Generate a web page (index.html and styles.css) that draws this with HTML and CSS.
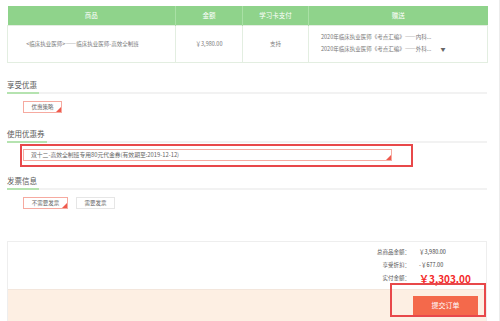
FILE: index.html
```html
<!DOCTYPE html>
<html lang="zh-CN">

<head>
    <meta charset="UTF-8">
    <meta name="viewport" content="width=device-width, initial-scale=1.0">
    <title>确认订单</title>
    <link rel="stylesheet" href="styles.css">
</head>

<body>
    <div id="page">
        <table class="goods">
            <thead>
                <tr>
                    <th class="c1">商品</th>
                    <th class="c2">金额</th>
                    <th class="c3">学习卡支付</th>
                    <th class="c4">赠送</th>
                </tr>
            </thead>
            <tbody>
                <tr>
                    <td class="name">&lt;临床执业医师&gt;——临床执业医师-高效全制班</td>
                    <td>￥3,980.00</td>
                    <td>支持</td>
                    <td class="gift">
                        <p>2020年临床执业医师《考点汇编》——内科...</p>
                        <p>2020年临床执业医师《考点汇编》——外科... <span class="arrow">▼</span></p>
                    </td>
                </tr>
            </tbody>
        </table>

        <div class="sec-title first"><span>享受优惠</span></div>
        <div class="opts">
            <span class="opt on">优惠策略</span>
        </div>

        <div class="sec-title"><span>使用优惠券</span></div>
        <div class="coupon-box">
            <div class="coupon on">双十二-高效全制班专用80元代金券(有效期至:2019-12-12)</div>
        </div>

        <div class="sec-title third"><span>发票信息</span></div>
        <div class="opts">
            <span class="opt on wide">不需要发票</span>
            <span class="opt">需要发票</span>
        </div>

        <div class="total">
            <div class="prices">
                <span class="lbl">总商品金额：</span><span class="val">￥3,980.00</span>
                <span class="lbl">享受折扣：</span><span class="val">-￥677.00</span>
                <span class="lbl">实付金额：</span><span class="val big">￥3,303.00</span>
            </div>
            <div class="submit-bar">
                <span class="submit">提交订单</span>
            </div>
            <div class="mark"></div>
        </div>
    </div>
</body>

</html>
```

FILE: styles.css
```css
* {
    margin: 0;
    padding: 0;
    box-sizing: border-box;
}

body {
    font-family: "Noto Sans CJK SC", "Noto Sans", sans-serif;
    color: #666;
    background: #fff;
}

#page {
    width: 500px;
    height: 321px;
    padding: 6px 0 0 7px;
    border-right: 1px solid #ececec;
    overflow: hidden;
}

.goods {
    width: 480px;
    border-collapse: collapse;
    table-layout: fixed;
    font-size: 5.5px;
}

.goods th {
    height: 19px;
    background-color: #8fd38b;
    color: #fff;
    font-weight: normal;
    font-size: 6.5px;
    border-left: 1px solid #a9e0a5;
}

.goods th:first-child {
    border-left: none;
}

.c1 { width: 168px; }
.c2 { width: 67px; }
.c3 { width: 66px; }
.c4 { width: 179px; }

.goods td {
    height: 37px;
    text-align: center;
    border: 1px solid #e3eee1;
    color: #777;
}

.goods td.name {
    padding-right: 18px;
}

.goods td.gift {
    text-align: left;
    padding-left: 12px;
}

.gift p {
    line-height: 11px;
}

.arrow {
    margin-left: 8px;
    font-size: 5px;
    color: #666;
}

.sec-title {
    width: 480px;
    margin-top: 12px;
    padding-top: 1px;
    line-height: 15px;
    font-size: 7.5px;
    color: #5a5a5a;
    border-bottom: 2px solid #f2f2f2;
}

.sec-title.first {
    margin-top: 13px;
}

.sec-title.third {
    margin-top: 5px;
}

.sec-title span {
    display: inline-block;
    padding-right: 2px;
    border-bottom: 2px solid #b5e3b0;
    margin-bottom: -2px;
    vertical-align: top;
}

.opts {
    display: flex;
    gap: 8px;
    margin: 7px 0 0 16px;
}

.opt {
    position: relative;
    width: 39px;
    height: 12px;
    line-height: 10px;
    text-align: center;
    font-size: 5.5px;
    color: #666;
    border: 1px solid #e6e6e6;
}

.opt.wide {
    width: 45px;
}

.on {
    border-color: #f6aaa0;
}

.on::after {
    content: "";
    position: absolute;
    right: 0;
    bottom: 0;
    border-left: 5px solid transparent;
    border-bottom: 5px solid #ef5a4e;
}

.coupon-box {
    width: 393px;
    height: 23px;
    margin: 1px 0 0 13px;
    padding: 3px 0 0 1px;
    border: 2px solid #e8484a;
}

.coupon {
    position: relative;
    width: 369px;
    height: 12px;
    line-height: 10px;
    padding-left: 7px;
    font-size: 5.8px;
    color: #666;
    border: 1px solid #f6aaa0;
}

.total {
    position: relative;
    width: 480px;
    margin-top: 32px;
    border: 1px solid #eeeeee;
}

.prices {
    display: grid;
    grid-template-columns: 1fr 59px;
    column-gap: 9px;
    padding: 4px 8px 4px 0;
    font-size: 5.5px;
    line-height: 13px;
    color: #555;
}

.lbl {
    text-align: right;
}

.val {
    color: #444;
}

.val.big {
    font-size: 10px;
    font-weight: bold;
    color: #f42a2a;
    line-height: 13px;
}

.submit-bar {
    display: flex;
    justify-content: flex-end;
    height: 34px;
    padding: 6px 8px 0 0;
    background-color: #fdefe3;
    border-top: 1px solid #f3e6dc;
}

.submit {
    width: 65px;
    height: 19px;
    line-height: 19px;
    text-align: center;
    font-size: 7px;
    color: #fff;
    background-color: #f4694b;
}

.mark {
    position: absolute;
    left: 382px;
    top: 41px;
    width: 96px;
    height: 34px;
    border: 2px solid #e8484a;
}
```
